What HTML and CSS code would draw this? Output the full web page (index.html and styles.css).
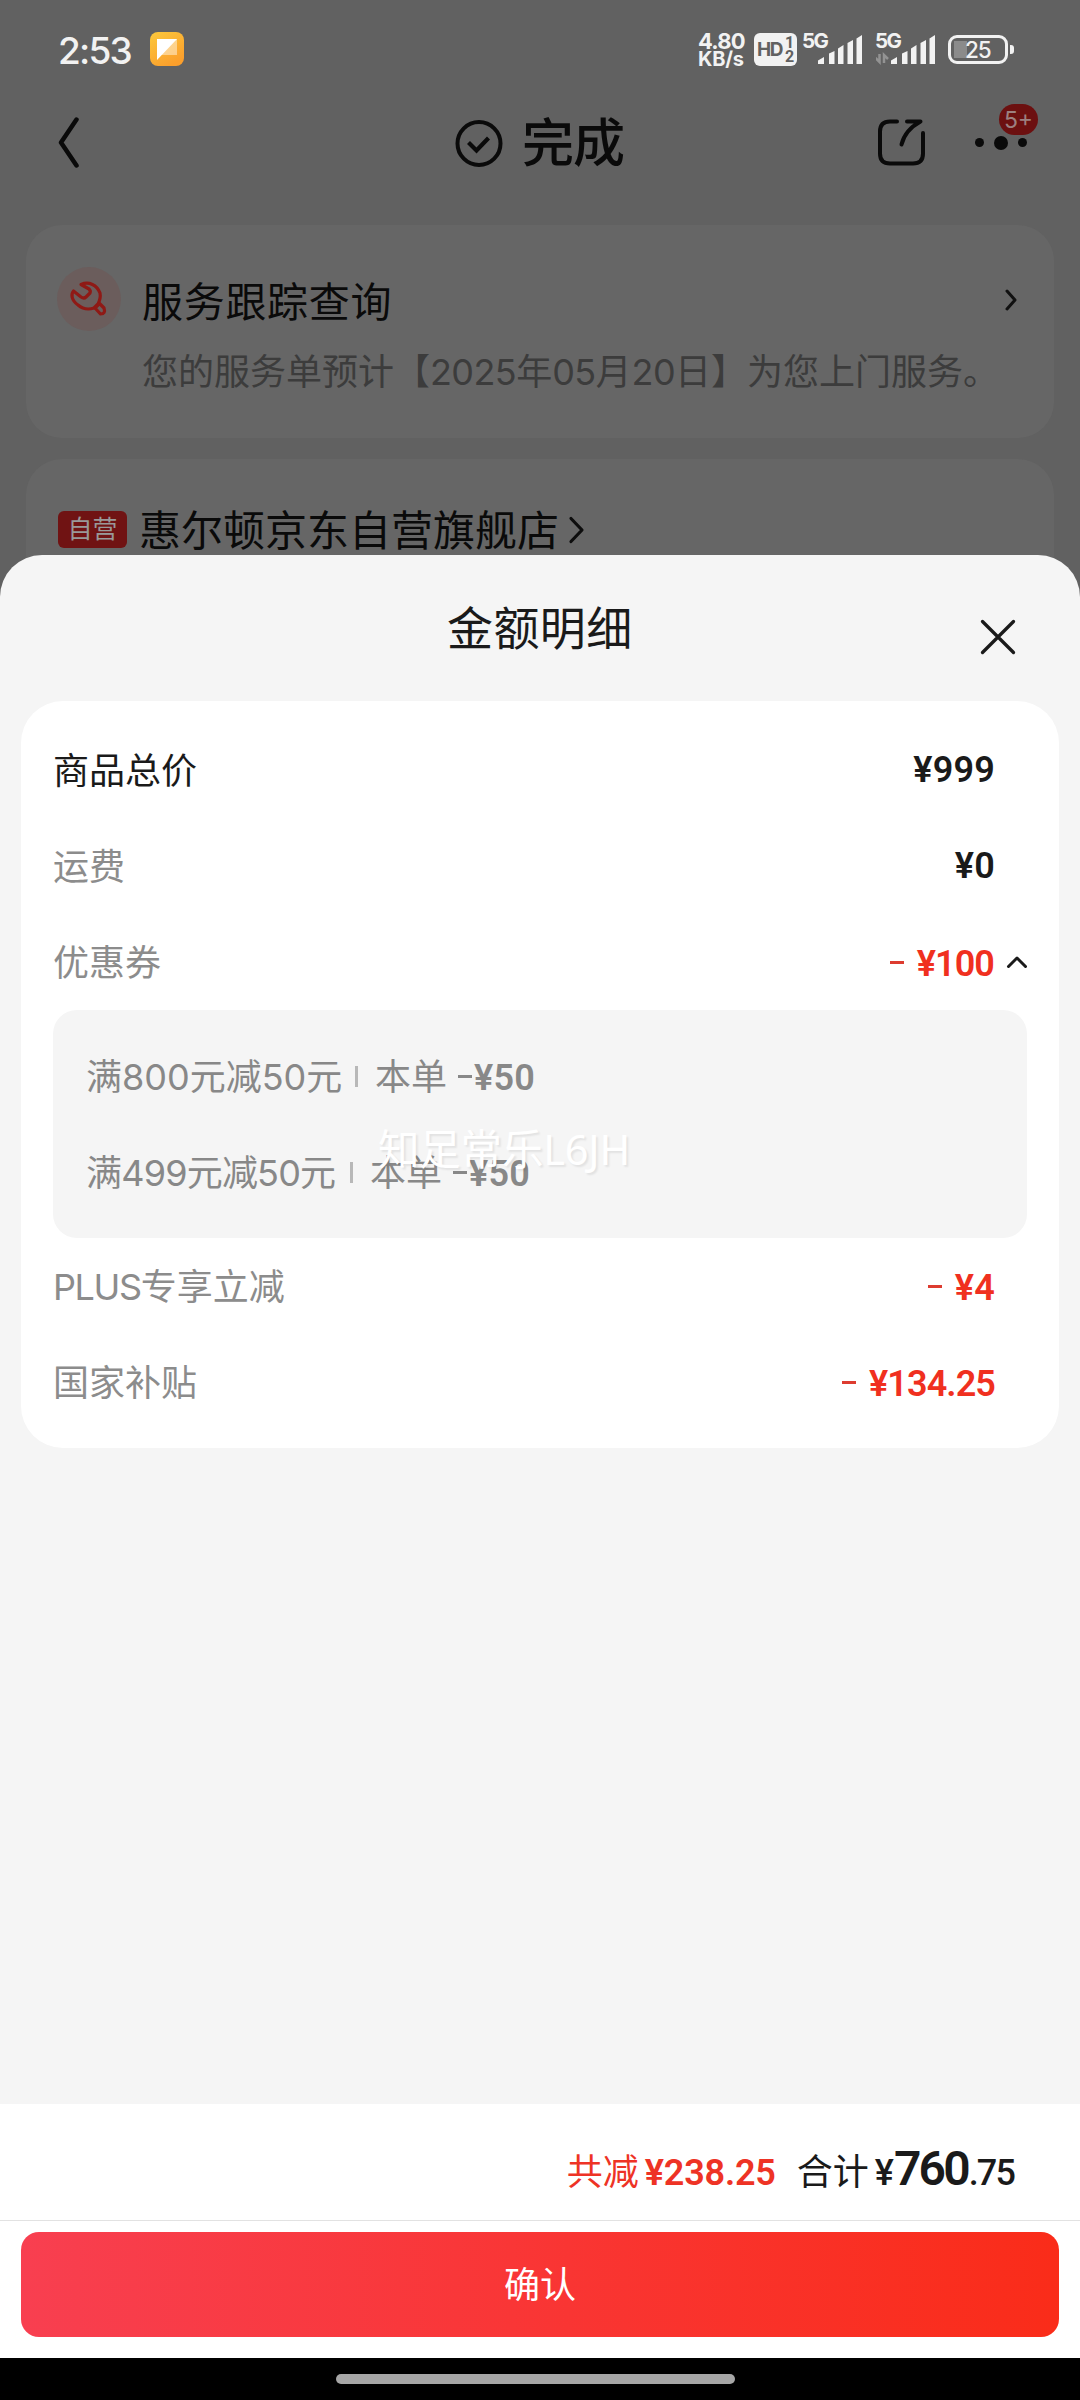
FILE: index.html
```html
<!DOCTYPE html>
<html lang="zh-CN">
<head>
<meta charset="utf-8">
<title>金额明细</title>
<link rel="stylesheet" href="styles.css">
</head>
<body>
<div class="phone">
  <div class="backdrop">
    <div class="status">
      <span class="time">2:53</span>
      <svg class="app" width="34" height="34" viewBox="0 0 34 34">
        <defs><linearGradient id="amber" x1="0" y1="0" x2=".6" y2="1"><stop offset="0" stop-color="#fcc93c"/><stop offset="1" stop-color="#fb9f2c"/></linearGradient></defs>
        <rect width="34" height="34" rx="8" fill="url(#amber)"/>
        <path d="M7 7H27V23H11z" fill="#fff" opacity=".45"/>
        <path d="M7 7H27L7 28z" fill="#fff"/>
      </svg>
      <div class="speed"><span class="rate">4.80</span><span class="unit">KB/s</span></div>
      <div class="hd"><span class="hd-t">HD</span><span class="hd-n"><i>1</i><i>2</i></span></div>
      <div class="sig sig-a"><span>5G</span>
        <svg width="60" height="32" viewBox="0 0 60 32"><g fill="#f2f2f2"><path d="M15 27.500L21 24V31H15z"/><path d="M26 20.500L31.500 18V31H26z"/><path d="M35 15.500L40.500 12V31H35z"/><path d="M44.500 10L50 7V31H44.500z"/><path d="M53.500 5.500L59 2V31H53.500z"/></g></svg>
      </div>
      <div class="sig sig-b"><span>5G</span>
        <svg width="60" height="32" viewBox="0 0 60 32"><g fill="#f2f2f2"><path d="M15 27.500L21 24V31H15z"/><path d="M26 20.500L31.500 18V31H26z"/><path d="M35 15.500L40.500 12V31H35z"/><path d="M44.500 10L50 7V31H44.500z"/><path d="M53.500 5.500L59 2V31H53.500z"/></g><path d="M3.500 21V29L-.5 25M8 30V22L12 26" fill="none" stroke="#939393" stroke-width="2.500"/></svg>
      </div>
      <div class="battery"><span>25</span></div><div class="nub"></div>
    </div>

    <div class="nav">
      <svg class="back" width="24" height="52" viewBox="0 0 24 52"><path d="M20.500 3.500L5 26.500L20.500 49.500" fill="none" stroke="#0a0a0a" stroke-width="4.500" stroke-linecap="round" stroke-linejoin="round"/></svg>
      <svg class="done" width="48" height="48" viewBox="0 0 48 48"><g fill="none" stroke="#0a0a0a"><circle cx="24" cy="23.500" r="21.500" stroke-width="4"/><path d="M13.500 22.500L21.500 30.500L33.500 18" stroke-width="4.200"/></g></svg>
      <span class="nav-title">完成</span>
      <svg class="share" width="50" height="50" viewBox="0 0 50 50"><g fill="none" stroke="#0a0a0a" stroke-width="4" stroke-linecap="round"><path d="M21 3.500H14Q4 3.500 4 13.500V35.500Q4 45.500 14 45.500H37Q47 45.500 47 35.500V15"/><path d="M31 3.500H44.500Q29 12 25.500 26.500" stroke-linejoin="round"/></g></svg>
      <div class="more"><i></i><i class="big"></i><i></i><span class="badge">5+</span></div>
    </div>

    <div class="dim-card service">
      <svg class="tool" width="64" height="64" viewBox="0 0 64 64"><circle cx="32" cy="32" r="32" fill="#6b5d5c"/><g fill="none" stroke="#8f1915" stroke-width="3.200" stroke-linejoin="round" stroke-linecap="round"><path d="M24 17.500C32 14 40 18 43 26Q44 31 41 37L37 41Q28 44 21 38C14 33 14 27 16.500 24L24 30Q27 32 29 30L33 26Q34 24 32 22Z"/><path d="M38 41L42.500 36.500L47 41Q49 47 43.500 47Z"/></g></svg>
      <div class="service-copy">
        <div class="service-title">服务跟踪查询</div>
        <div class="service-desc">您的服务单预计【<span>2025</span>年<span>05</span>月<span>20</span>日】为您上门服务。</div>
      </div>
      <svg class="go" width="14" height="22" viewBox="0 0 14 22"><path d="M3 2L11 11L3 20" fill="none" stroke="#111" stroke-width="3" stroke-linecap="round" stroke-linejoin="round"/></svg>
    </div>

    <div class="dim-card store">
      <span class="self">自营</span>
      <span class="store-name">惠尔顿京东自营旗舰店</span>
      <svg width="18" height="30" viewBox="0 0 18 30"><path d="M3 3.500L14 15L3 26.500" fill="none" stroke="#0d0d0d" stroke-width="3.200" stroke-linecap="round" stroke-linejoin="round"/></svg>
    </div>
  </div>

  <div class="sheet">
    <div class="sheet-head">
      <span class="sheet-title">金额明细</span>
      <svg class="close" width="38" height="38" viewBox="0 0 38 38"><path d="M3.500 3.500L34.500 34.500M34.500 3.500L3.500 34.500" stroke="#1a1a1a" stroke-width="3.300" stroke-linecap="round"/></svg>
    </div>
    <div class="bill">
      <div class="row main"><span class="label">商品总价</span><span class="price">¥999</span></div>
      <div class="row"><span class="label">运费</span><span class="price">¥0</span></div>
      <div class="row cut"><span class="label">优惠券</span><i class="minus"></i><span class="price tight">¥100</span>
        <svg class="fold" width="22" height="14" viewBox="0 0 22 14"><path d="M2.500 11.500L11 3L19.500 11.500" fill="none" stroke="#1a1a1a" stroke-width="3" stroke-linecap="round" stroke-linejoin="round"/></svg>
      </div>
      <div class="coupons">
        <div class="coupon"><span class="rule">满800元减50元</span><i class="bar"></i><span class="this">本单</span><i class="minus"></i><span class="price">¥50</span></div>
        <div class="coupon second"><span class="rule">满499元减50元</span><i class="bar"></i><span class="this">本单</span><i class="minus"></i><span class="price">¥50</span></div>
        <span class="mark">知足常乐L6JH</span>
      </div>
      <div class="row cut"><span class="label"><span class="plus">PLUS</span>专享立减</span><i class="minus"></i><span class="price">¥4</span></div>
      <div class="row cut"><span class="label">国家补贴</span><i class="minus"></i><span class="price tight">¥134.25</span></div>
    </div>
    <div class="footer">
      <div class="totals">
        <span class="t-label saved">共减</span><span class="t-price saved">¥238.25</span>
        <span class="t-label sum">合计</span><span class="t-price total">¥<b>760</b><em>.75</em></span>
      </div>
      <div class="confirm">确认</div>
    </div>
    <div class="home"><i></i></div>
  </div>
</div>
</body>
</html>
```
FILE: styles.css
```css
* { box-sizing: border-box; }
body { margin: 0; font-family: Inter, "Noto Sans CJK SC", sans-serif; }
i, em { font-style: normal; }
svg { display: block; flex: none; }
.phone { width: 1080px; height: 2400px; display: flex; flex-direction: column; overflow: hidden; background: #616161; }

.backdrop { height: 605px; flex: none; overflow: hidden; color: #0a0a0a; }
.status { height: 98px; padding: 32px 0 0 58px; display: flex; align-items: flex-start; color: #f2f2f2; }
.time { width: 92px; font-size: 37px; line-height: 37px; font-weight: 500; letter-spacing: -1.800px; white-space: nowrap; }
.speed { margin-left: 514px; width: 56px; display: flex; flex-direction: column; font-weight: 700; font-family: Inter, sans-serif; }
.rate { font-size: 22px; line-height: 18px; letter-spacing: -.8px; }
.unit { font-size: 20px; line-height: 18px; letter-spacing: -.2px; }
.hd { width: 43px; height: 33px; margin-top: 1px; border-radius: 6px; background: #f2f2f2; color: #616161; display: flex; align-items: center; padding-left: 3px; font-weight: 700; }
.hd-t { font-size: 19px; letter-spacing: -1.400px; width: 28px; }
.hd-n { display: flex; flex-direction: column; font-family: Roboto, sans-serif; font-size: 16px; line-height: 14px; align-items: center; }
.hd-n i { height: 14px; }
.sig { position: relative; width: 60px; height: 32px; margin-top: 1px; }
.sig span { position: absolute; left: -1px; top: 0; font-size: 20.500px; line-height: 16px; font-weight: 700; letter-spacing: -1.500px; }
.sig-a { margin-left: 6px; }
.sig-b { margin-left: 13px; }
.battery { margin: 3px 0 0 12px; width: 60px; height: 29px; border: 3.300px solid #f2f2f2; border-radius: 9px; font-size: 22.500px; line-height: 23px; font-weight: 500; padding-left: 14px; letter-spacing: -1.200px; background: linear-gradient(#8b8b8b, #8b8b8b) 3px 3px / 13px 17px no-repeat; }
.nub { margin: 13px 0 0 2px; width: 4px; height: 9px; border-radius: 0 3px 3px 0; background: #f2f2f2; }

.nav { height: 127px; padding-left: 56px; display: flex; align-items: flex-start; }
.back { margin-top: 18px; }
.done { margin: 22px 0 0 375px; }
.nav-title { width: 110px; margin: 16px 0 0 19px; font-size: 52px; line-height: 60px; font-weight: 500; letter-spacing: -1px; white-space: nowrap; }
.share { margin: 20px 0 0 244px; }
.more { position: relative; margin: 37px 0 0 49px; width: 52px; height: 15px; display: flex; align-items: center; justify-content: space-between; }
.more i { width: 9px; height: 9px; border-radius: 50%; background: #0a0a0a; }
.more .big { width: 14px; height: 14px; }
.badge { position: absolute; left: 24px; top: -31px; width: 39px; height: 31px; border-radius: 15.500px; background: #6c1010; color: #9c8080; font-size: 23px; line-height: 32px; text-align: center; }

.dim-card { width: 1028px; margin: 0 26px 21px; border-radius: 36px; background: #666; display: flex; align-items: flex-start; }
.service { height: 213px; padding: 42px 0 0 31px; }
.service-copy { width: 870px; margin-left: 21px; white-space: nowrap; }
.service-title { height: 72px; padding-top: 2px; font-size: 41px; line-height: 66px; letter-spacing: .7px; font-weight: 400; }
.service-desc { font-size: 36px; line-height: 66px; color: #3c3c3c; }
.service-desc span { letter-spacing: -.6px; }
.go { margin: 22px 0 0 -8px; }
.store { height: 213px; padding: 52px 0 0 32px; }
.self { width: 69px; height: 37px; border-radius: 6px; background: #701313; color: #999; font-size: 25px; line-height: 37px; text-align: center; }
.store-name { margin: -8px 9px 0 12px; font-size: 42px; line-height: 56px; }
.store svg { margin-top: 4px; }

.sheet { position: relative; margin-top: -50px; height: 1845px; flex: none; border-radius: 42px 42px 0 0; background: #f5f5f5; color: #1a1a1a; display: flex; flex-direction: column; overflow: hidden; }
.sheet-head { height: 146px; display: flex; padding-left: 447px; }
.sheet-title { width: 532px; padding-top: 43px; font-size: 46px; line-height: 60px; letter-spacing: .4px; white-space: nowrap; }
.close { margin-top: 63px; }
.bill { width: 1038px; margin: 0 21px; padding: 21px 32px 18px; border-radius: 42px; background: #fff; }
.row { height: 96px; padding-right: 32px; display: flex; align-items: center; color: #1a1a1a; font-size: 36px; }
.label { flex: 1; padding-top: 2px; line-height: 50px; color: #8c8c8c; }
.main .label { color: #1a1a1a; }
.plus { letter-spacing: -1.400px; }
.price { font-family: Roboto, sans-serif; font-weight: 600; font-size: 36px; line-height: 44px; letter-spacing: .2px; }
.cut .price { padding-top: 3px; color: #f0301f; }
.price.tight { letter-spacing: -.9px; }
.minus { width: 14px; height: 3px; margin-right: 13px; background: #dd3c30; }
.fold { margin: 0 -33px 0 12px; }
.coupons { position: relative; height: 228px; padding: 18px 33px; border-radius: 24px; background: #f5f5f5; color: #888; font-size: 36px; }
.coupon { height: 96px; display: flex; align-items: center; }
.coupon .minus { height: 3px; margin: 0 2px 0 11px; background: #888; }
.coupon .price { padding-top: 3px; }
.rule { width: 269px; white-space: nowrap; }
.rule, .this { margin-top: -4px; }
.second .rule { width: 264px; letter-spacing: -.8px; }
.bar { width: 3px; height: 21px; margin-right: 17px; background: #b8b8b8; }
.mark { position: absolute; left: 325px; top: 109px; font: 41.500px/60px "Noto Sans", "Noto Sans CJK SC", sans-serif; letter-spacing: -.2px; color: #fff; text-shadow: 2px 2px 2px rgba(0,0,0,.08); white-space: nowrap; }

.footer { margin-top: auto; height: 254px; background: #fff; }
.totals { height: 117px; padding: 0 66px 0 0; border-bottom: 1px solid #e2e2e2; display: flex; align-items: baseline; justify-content: flex-end; line-height: 129px; }
.t-label { font-size: 36px; }
.t-price { font-family: Roboto, sans-serif; font-size: 36px; font-weight: 600; margin-left: 6px; }
.t-price.saved { letter-spacing: -.2px; }
.saved { color: #ee3325; }
.sum { margin-left: 21px; }
.t-price b { font-size: 48px; font-weight: 600; letter-spacing: -2.800px; }
.t-price em { margin-left: 1px; font-weight: 500; letter-spacing: -1.900px; }
.total { font-weight: 500; }
.confirm { width: 1038px; height: 105px; margin: 11px 21px 0; border-radius: 18px; background: linear-gradient(90deg, #f83f50, #fa2c19); color: #fff; font-size: 36px; line-height: 106px; text-align: center; }
.home { height: 42px; flex: none; background: #000; padding: 16px 0 0 336px; }
.home i { display: block; width: 399px; height: 10px; border-radius: 5px; background: #a6a6a6; }
```
